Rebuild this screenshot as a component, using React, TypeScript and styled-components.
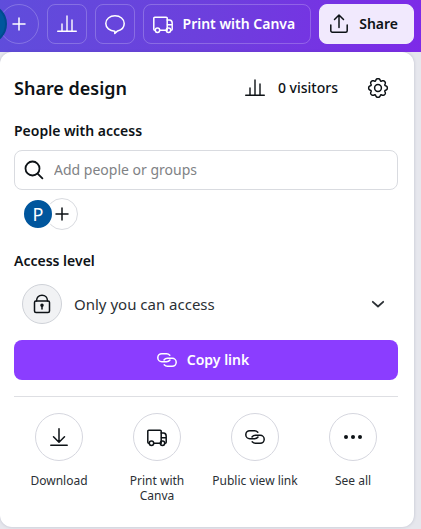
import React from "react";
import styled, { createGlobalStyle } from "styled-components";

const GlobalStyle = createGlobalStyle`
  *, *::before, *::after { box-sizing: border-box; }
  body {
    margin: 0;
    background: #e6e7ed;
    color: #0d1216;
    font-family: "Noto Sans", "Open Sans", sans-serif;
    font-size: 14px;
    line-height: 20px;
  }
  button, input { font: inherit; color: inherit; }
  button { cursor: pointer; }
  svg { display: block; flex: none; }
`;

const Page = styled.div`
  overflow: hidden;
  padding-bottom: 2px;
`;

const Header = styled.header`
  display: flex;
  justify-content: flex-end;
  gap: 8px;
  height: 52px;
  padding: 4px 7px 8px 0;
  background: linear-gradient(100deg, #5f4ddb 0%, #6d3fdd 50%, #7d2ae8 100%);
  color: #ffffff;
`;

const HeaderButton = styled.button<{ $solid?: boolean; $wide?: boolean }>`
  display: flex;
  flex: none;
  align-items: center;
  justify-content: center;
  gap: 8px;
  height: 40px;
  min-width: 40px;
  padding: ${(p) => (p.$wide ? "0 15px 0 7px" : "0")};
  border: 1px solid ${(p) => (p.$solid ? "#f1e9fd" : "rgba(255, 255, 255, 0.22)")};
  border-radius: 8px;
  background: ${(p) => (p.$solid ? "#f1e9fd" : "transparent")};
  color: ${(p) => (p.$solid ? "#0d1216" : "#ffffff")};
  font-weight: 600;
  white-space: nowrap;
`;

const People = styled.div`
  display: flex;
  flex: none;
  align-items: center;
`;

const Avatar = styled.span<{ $large?: boolean }>`
  position: relative;
  display: flex;
  align-items: center;
  justify-content: center;
  width: ${(p) => (p.$large ? 40 : 32)}px;
  height: ${(p) => (p.$large ? 40 : 32)}px;
  border: 2px solid ${(p) => (p.$large ? "#004a8f" : "#ffffff")};
  border-radius: 50%;
  background: #00569d;
  color: #ffffff;
  font-size: 18px;
`;

const AddButton = styled.button<{ $large?: boolean }>`
  display: flex;
  align-items: center;
  justify-content: center;
  width: ${(p) => (p.$large ? 40 : 32)}px;
  height: ${(p) => (p.$large ? 40 : 32)}px;
  margin-left: -8px;
  padding: 0;
  border: 1px solid ${(p) => (p.$large ? "rgba(255, 255, 255, 0.22)" : "#d9dbe0")};
  border-radius: 50%;
  background: transparent;
`;

const Panel = styled.main`
  margin-right: 7px;
  padding: 16px 16px 24px 14px;
  border-radius: 12px;
  background: #ffffff;
  box-shadow: 0 0 3px rgba(64, 70, 110, 0.25);
`;

const TitleRow = styled.div`
  display: flex;
  align-items: center;
  height: 40px;
`;

const Title = styled.h1`
  flex: 1;
  margin: 0;
  font-size: 18px;
  font-weight: 600;
  line-height: 24px;
`;

const PlainButton = styled.button`
  display: flex;
  align-items: center;
  justify-content: center;
  gap: 8px;
  min-width: 40px;
  height: 40px;
  padding: 0;
  border: 0;
  background: transparent;
  font-weight: 500;
`;

const Visitors = styled(PlainButton)`
  gap: 11px;
  margin-right: 20px;
`;

const SectionLabel = styled.label`
  display: block;
  padding: 13px 0 9px;
  font-weight: 600;
  line-height: 20px;
`;

const AccessLabel = styled.h2`
  margin: 21px 0 13px;
  font-size: 14px;
  font-weight: 600;
  line-height: 20px;
`;

const SearchBox = styled.div`
  display: flex;
  align-items: center;
  gap: 8px;
  height: 40px;
  padding: 0 7px;
  border: 1px solid #d9dbe0;
  border-radius: 8px;
`;

const SearchInput = styled.input`
  flex: 1;
  min-width: 0;
  padding: 0;
  border: 0;
  outline: 0;
  background: transparent;
  &::placeholder { color: #7f8285; opacity: 1; }
`;

const Members = styled(People)`
  padding: 8px 8px 0;
`;

const AccessButton = styled.button`
  display: flex;
  align-items: center;
  gap: 12px;
  width: 100%;
  padding: 0 8px;
  border: 0;
  background: transparent;
  text-align: left;
  color: #2b3035;
  font-size: 15px;
`;

const AccessIcon = styled.span`
  display: flex;
  align-items: center;
  justify-content: center;
  width: 40px;
  height: 40px;
  border: 1px solid #cfd2d8;
  border-radius: 50%;
  background: #f1f2f4;
  color: #0d1216;
`;

const Grow = styled.span`
  flex: 1;
`;

const CopyButton = styled.button`
  display: flex;
  align-items: center;
  justify-content: center;
  gap: 8px;
  width: 100%;
  height: 40px;
  margin: 16px 0;
  padding: 0 12px 0 4px;
  border: 0;
  border-radius: 8px;
  background: #8b3dff;
  color: #ffffff;
  font-weight: 600;
`;

const Actions = styled.div`
  display: grid;
  grid-template-columns: repeat(4, 1fr);
  margin: 0 -4px;
`;

const Divider = styled.hr`
  height: 1px;
  margin: 0 0 16px;
  border: 0;
  background: #dedfe3;
`;

const Action = styled.button`
  display: flex;
  flex-direction: column;
  align-items: center;
  gap: 12px;
  padding: 0;
  border: 0;
  background: transparent;
  color: #2b3035;
  font-size: 12px;
  line-height: 15px;
`;

const ActionIcon = styled.span`
  display: flex;
  align-items: center;
  justify-content: center;
  width: 48px;
  height: 48px;
  border: 1px solid #d6d7df;
  border-radius: 50%;
  color: #0d1216;
`;

const ActionText = styled.span`
  max-width: 90px;
`;

const Icon = ({ children, width = 1.5 }: { children: React.ReactNode; width?: number }) => (
  <svg
    width="24"
    height="24"
    viewBox="0 0 24 24"
    fill="none"
    stroke="currentColor"
    strokeWidth={width}
    strokeLinecap="round"
    strokeLinejoin="round"
    aria-hidden="true"
  >
    {children}
  </svg>
);

const PlusIcon = () => (
  <Icon><path d="M12 6v12M6 12h12" /></Icon>
);

const ChartIcon = () => (
  <Icon width={1.4}><path d="M2.7 19.2h18.6M7 19V12M12 19V4M17 19V8" /></Icon>
);

const BubbleIcon = () => (
  <Icon>
    <path d="M12 3.8c5.2 0 9.2 3.3 9.2 7.7 0 3.600-2.700 6.500-6.600 7.400l-2.800 2.500v-2.200C6.700 19.100 2.800 15.800 2.800 11.500 2.800 7.100 6.800 3.800 12 3.800Z" />
  </Icon>
);

const TruckIcon = () => (
  <Icon>
    <path d="M4.3 18.2H3.8a1 1 0 0 1-1-1V6.3a1 1 0 0 1 1-1h11.4a1 1 0 0 1 1 1v11.900H8.700" />
    <path d="M16.2 8h2.3c1.5 0 2.700 1.500 2.700 3.300v5.900a1 1 0 0 1-1 1M16.500 12.800h4.600" />
    <circle cx="6.5" cy="18.2" r="2.2" />
    <circle cx="17.5" cy="18.2" r="2.2" />
  </Icon>
);

const ShareIcon = () => (
  <Icon>
    <path d="M3.8 13v5.7a1.500 1.500 0 0 0 1.500 1.500h13.400a1.500 1.500 0 0 0 1.500-1.500V13M12 15.500V3.300M7.500 7.500 12 3l4.500 4.500" />
  </Icon>
);

// Eight flat lobes with narrow notches between them.
const gearOutline = Array.from({ length: 128 }, (_, i) => {
  const angle = (i / 128) * Math.PI * 2;
  const notch = ((1 - Math.cos(8 * angle)) / 2) ** 2;
  const radius = 9.3 - 1.9 * notch;
  return `${(12 + radius * Math.sin(angle)).toFixed(2)},${(12 - radius * Math.cos(angle)).toFixed(2)}`;
}).join(" ");

const GearIcon = () => (
  <Icon>
    <circle cx="12" cy="12" r="3.4" />
    <polygon points={gearOutline} />
  </Icon>
);

const SearchIcon = () => (
  <Icon width={1.8}>
    <circle cx="10.5" cy="10.5" r="7" />
    <path d="m15.6 15.6 4.8 4.8" />
  </Icon>
);

const LockIcon = () => (
  <Icon>
    <rect x="4.5" y="9" width="15" height="11.5" rx="1.5" />
    <path d="M6.5 9C6.500 5.500 8.800 3.300 12 3.300s5.500 2.200 5.500 5.700M12 14v3" />
    <circle cx="12" cy="13.3" r="1" fill="currentColor" />
  </Icon>
);

const ChevronIcon = () => (
  <Icon width={1.8}><path d="m6.8 9.8 5.200 4.700 5.200-4.700" /></Icon>
);

const LinkIcon = () => (
  <Icon>
    <path d="M14.8 7.200C14 6.300 12.900 5.700 11.600 5.700H6.800a4 4 0 0 0 0 8h4.700c1.500 0 2.700-.6 3.500-1.700" />
    <path d="M9.2 16.800c.8.9 1.900 1.500 3.200 1.500h4.800a4 4 0 0 0 0-8h-4.700c-1.500 0-2.700.6-3.500 1.700" />
  </Icon>
);

const DownloadIcon = () => (
  <Icon><path d="M12 3.800v13M6.500 11.800l5.500 5.500 5.500-5.500M3.800 20.200h16.400" /></Icon>
);

const MoreIcon = () => (
  <Icon width={0}>
    <g fill="currentColor">
      <circle cx="5" cy="12" r="2" />
      <circle cx="12" cy="12" r="2" />
      <circle cx="19" cy="12" r="2" />
    </g>
  </Icon>
);

const actions = [
  { label: "Download", icon: <DownloadIcon /> },
  { label: "Print with Canva", icon: <TruckIcon /> },
  { label: "Public view link", icon: <LinkIcon /> },
  { label: "See all", icon: <MoreIcon /> },
];

export default function App() {
  return (
    <>
      <GlobalStyle />
      <Page>
        <Header>
          <People>
            <Avatar $large />
            <AddButton $large aria-label="Add member"><PlusIcon /></AddButton>
          </People>
          <HeaderButton aria-label="Insights"><ChartIcon /></HeaderButton>
          <HeaderButton aria-label="Comments"><BubbleIcon /></HeaderButton>
          <HeaderButton $wide><TruckIcon />Print with Canva</HeaderButton>
          <HeaderButton $wide $solid><ShareIcon />Share</HeaderButton>
        </Header>
        <Panel>
          <TitleRow>
            <Title>Share design</Title>
            <Visitors><ChartIcon />0 visitors</Visitors>
            <PlainButton aria-label="Settings"><GearIcon /></PlainButton>
          </TitleRow>
          <SectionLabel htmlFor="people">People with access</SectionLabel>
          <SearchBox>
            <SearchIcon />
            <SearchInput id="people" type="text" placeholder="Add people or groups" />
          </SearchBox>
          <Members>
            <Avatar>P</Avatar>
            <AddButton aria-label="Add person"><PlusIcon /></AddButton>
          </Members>
          <AccessLabel>Access level</AccessLabel>
          <AccessButton>
            <AccessIcon><LockIcon /></AccessIcon>
            <Grow>Only you can access</Grow>
            <ChevronIcon />
          </AccessButton>
          <CopyButton><LinkIcon />Copy link</CopyButton>
          <Divider />
          <Actions>
            {actions.map((a) => (
              <Action key={a.label}>
                <ActionIcon>{a.icon}</ActionIcon>
                <ActionText>{a.label}</ActionText>
              </Action>
            ))}
          </Actions>
        </Panel>
      </Page>
    </>
  );
}
